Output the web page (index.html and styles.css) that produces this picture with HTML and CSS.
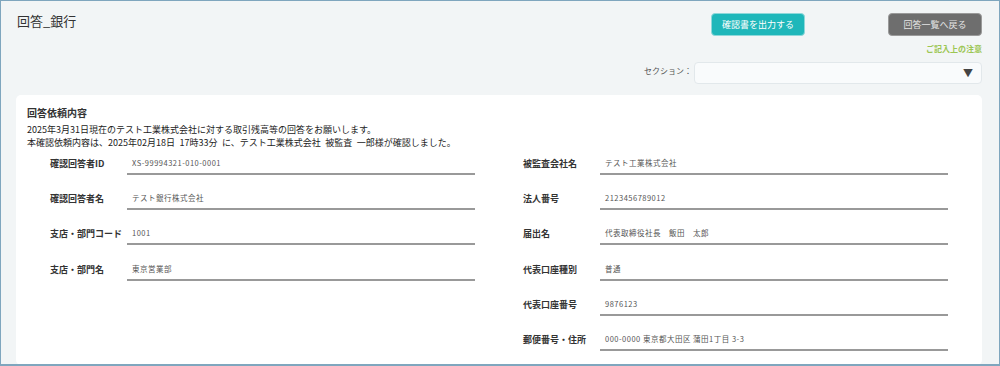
FILE: index.html
```html
<!DOCTYPE html>
<html lang="ja">
<head>
    <meta charset="UTF-8">
    <meta name="viewport" content="width=device-width, initial-scale=1.0">
    <title>回答_銀行</title>
    <link rel="stylesheet" href="styles.css">
</head>
<body>
    <div class="page">
        <div class="header">
            <h1 class="title">回答_銀行</h1>
            <div class="actions">
                <div class="buttons">
                    <button class="btn btn-output">確認書を出力する</button>
                    <button class="btn btn-back">回答一覧へ戻る</button>
                </div>
                <a class="notes" href="#">ご記入上の注意</a>
                <div class="section-row">
                    <label class="section-label" for="section">セクション：</label>
                    <div class="select">
                        <span class="select-arrow">▼</span>
                    </div>
                </div>
            </div>
        </div>

        <div class="card">
            <h2 class="card-title">回答依頼内容</h2>
            <p class="lead">2025年3月31日現在のテスト工業株式会社に対する取引残高等の回答をお願いします。<br>
                本確認依頼内容は、2025年02月18日 17時33分 に、テスト工業株式会社 被監査 一郎様が確認しました。</p>

            <div class="fields">
                <div class="column">
                    <div class="field">
                        <span class="field-label">確認回答者ID</span>
                        <span class="field-value">XS-99994321-010-0001</span>
                    </div>
                    <div class="field">
                        <span class="field-label">確認回答者名</span>
                        <span class="field-value">テスト銀行株式会社</span>
                    </div>
                    <div class="field">
                        <span class="field-label">支店・部門コード</span>
                        <span class="field-value">1001</span>
                    </div>
                    <div class="field">
                        <span class="field-label">支店・部門名</span>
                        <span class="field-value">東京営業部</span>
                    </div>
                </div>
                <div class="column">
                    <div class="field">
                        <span class="field-label">被監査会社名</span>
                        <span class="field-value">テスト工業株式会社</span>
                    </div>
                    <div class="field">
                        <span class="field-label">法人番号</span>
                        <span class="field-value">2123456789012</span>
                    </div>
                    <div class="field">
                        <span class="field-label">届出名</span>
                        <span class="field-value">代表取締役社長　飯田　太郎</span>
                    </div>
                    <div class="field">
                        <span class="field-label">代表口座種別</span>
                        <span class="field-value">普通</span>
                    </div>
                    <div class="field">
                        <span class="field-label">代表口座番号</span>
                        <span class="field-value">9876123</span>
                    </div>
                    <div class="field">
                        <span class="field-label">郵便番号・住所</span>
                        <span class="field-value">000-0000 東京都大田区 蒲田1丁目 3-3</span>
                    </div>
                </div>
            </div>
        </div>
    </div>
</body>
</html>
```

FILE: styles.css
```css
html, body {
    margin: 0;
    padding: 0;
}
body {
    font-family: "Noto Sans CJK JP", "Noto Sans", sans-serif;
    color: #333;
    background-color: #f2f5f6;
}
.page {
    box-sizing: border-box;
    width: 1000px;
    height: 366px;
    overflow: hidden;
    border: 1px solid #7fa6be;
    border-bottom-width: 2px;
    padding: 12px 17px 0 15px;
}

.header {
    display: flex;
    justify-content: space-between;
    align-items: flex-start;
}
.title {
    margin: -1px 0 0 1px;
    font-size: 13px;
    font-weight: normal;
    line-height: 18px;
    color: #333;
}
.actions {
    display: flex;
    flex-direction: column;
    align-items: flex-end;
}
.buttons {
    display: flex;
    gap: 83px;
}
.btn {
    width: 94px;
    height: 23px;
    border-radius: 4px;
    font-family: inherit;
    font-size: 9px;
    cursor: pointer;
}
.btn-output {
    background-color: #1fb7ba;
    border: 1px solid #8fd8da;
    color: #fff;
}
.btn-back {
    background-color: #6e6e6e;
    border: 1px solid #9a9a9a;
    color: #e4e4e4;
}
.notes {
    margin-top: 7px;
    font-size: 8px;
    line-height: 12px;
    font-weight: bold;
    color: #9cc653;
    text-decoration: none;
}
.section-row {
    display: flex;
    align-items: center;
    margin-top: 7px;
}
.section-label {
    font-size: 8px;
    color: #555;
    margin-right: 2px;
    margin-top: -6px;
}
.select {
    box-sizing: border-box;
    width: 288px;
    height: 22px;
    background-color: #f9fbfc;
    border: 1px solid #e2e8eb;
    border-radius: 4px;
    display: flex;
    align-items: center;
    justify-content: flex-end;
    padding-right: 8px;
}
.select-arrow {
    font-size: 10px;
    color: #444;
    line-height: 1;
}

.card {
    margin-top: 11px;
    background-color: #fff;
    border-radius: 5px;
    padding: 10px 0 14px 0;
}
.card-title {
    margin: 0 0 0 11px;
    font-size: 10px;
    font-weight: bold;
    line-height: 15px;
    color: #333;
}
.lead {
    margin: 3px 0 0 11px;
    font-size: 9px;
    line-height: 13px;
    color: #222;
    word-spacing: 2.5px;
}
.fields {
    display: grid;
    grid-template-columns: 425px 425px;
    column-gap: 48px;
    padding: 4px 34px 0 34px;
}
.column {
    display: flex;
    flex-direction: column;
    gap: 13.2px;
}
.field {
    display: flex;
    align-items: flex-end;
    height: 22px;
}
.field-label {
    width: 77px;
    flex-shrink: 0;
    font-size: 9px;
    font-weight: bold;
    line-height: 22px;
    color: #333;
    white-space: nowrap;
}
.field-value {
    box-sizing: border-box;
    flex-grow: 1;
    height: 22px;
    line-height: 20px;
    padding-left: 5px;
    font-size: 7.5px;
    letter-spacing: 0.5px;
    color: #555;
    border-bottom: 2px solid #999;
}
```
